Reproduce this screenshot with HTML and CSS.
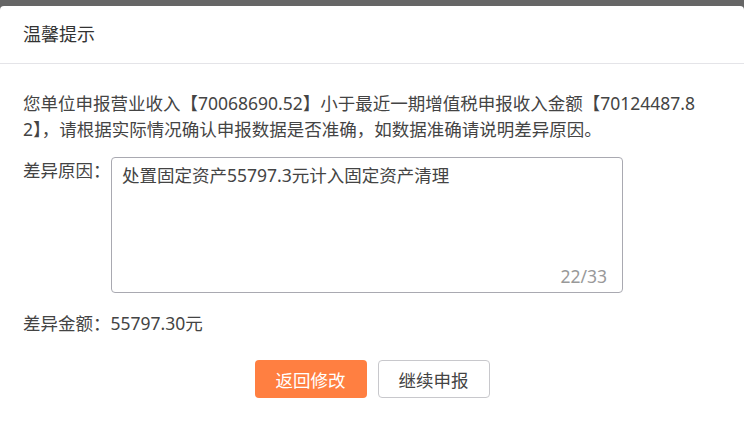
FILE: index.html
```html
<!DOCTYPE html>
<html lang="zh-CN">
<head>
    <meta charset="UTF-8">
    <meta name="viewport" content="width=device-width, initial-scale=1.0">
    <title>温馨提示</title>
    <link rel="stylesheet" href="styles.css">
</head>
<body>
    <div class="dialog">
        <div class="dialog-header">温馨提示</div>

        <div class="dialog-body">
            <p class="notice">您单位申报营业收入【70068690.52】小于最近一期增值税申报收入金额【70124487.82】，请根据实际情况确认申报数据是否准确，如数据准确请说明差异原因。</p>

            <div class="field">
                <label for="reason">差异原因：</label>
                <div class="textarea-wrap">
                    <textarea id="reason" maxlength="33">处置固定资产55797.3元计入固定资产清理</textarea>
                    <span class="counter">22/33</span>
                </div>
            </div>

            <div class="amount">差异金额：55797.30元</div>

            <div class="actions">
                <button class="btn btn-primary">返回修改</button>
                <button class="btn btn-default">继续申报</button>
            </div>
        </div>
    </div>
</body>
</html>
```

FILE: styles.css
```css
body {
    margin: 0;
    padding-top: 6px;
    background-color: #666;
    font-family: "Noto Sans", "Noto Sans CJK SC", sans-serif;
    color: #444;
}

.dialog {
    background: #fff;
    border-radius: 4px 4px 0 0;
    min-height: 432px;
}

.dialog-header {
    height: 57px;
    line-height: 57px;
    padding: 0 23px;
    font-size: 18px;
    color: #333;
    border-bottom: 1px solid #e4e4e8;
}

.dialog-body {
    padding: 26px 23px 0;
    font-size: 17.5px;
    line-height: 26px;
}

.notice {
    margin: 0;
    word-break: break-all;
}

.field {
    display: flex;
    margin-top: 15px;
}

.field label {
    width: 88px;
    flex-shrink: 0;
}

.textarea-wrap {
    position: relative;
    width: 512px;
    height: 136px;
}

.textarea-wrap textarea {
    box-sizing: border-box;
    width: 100%;
    height: 100%;
    margin: 0;
    padding: 4px 10px;
    border: 1px solid #a9a9b1;
    border-radius: 4px;
    font-family: inherit;
    font-size: 17.5px;
    line-height: 26px;
    color: #444;
    resize: none;
    outline: none;
}

.counter {
    position: absolute;
    right: 16px;
    bottom: 4px;
    color: #999;
}

.amount {
    margin-top: 17px;
}

.actions {
    display: flex;
    justify-content: center;
    gap: 11px;
    margin-top: 24px;
}

.btn {
    width: 112px;
    height: 38px;
    border-radius: 4px;
    font-family: inherit;
    font-size: 17.5px;
    cursor: pointer;
}

.btn-primary {
    background-color: #ff7f41;
    color: #fff;
    border: none;
}

.btn-default {
    background-color: #fff;
    color: #444;
    border: 1px solid #c8c8cc;
}
```
